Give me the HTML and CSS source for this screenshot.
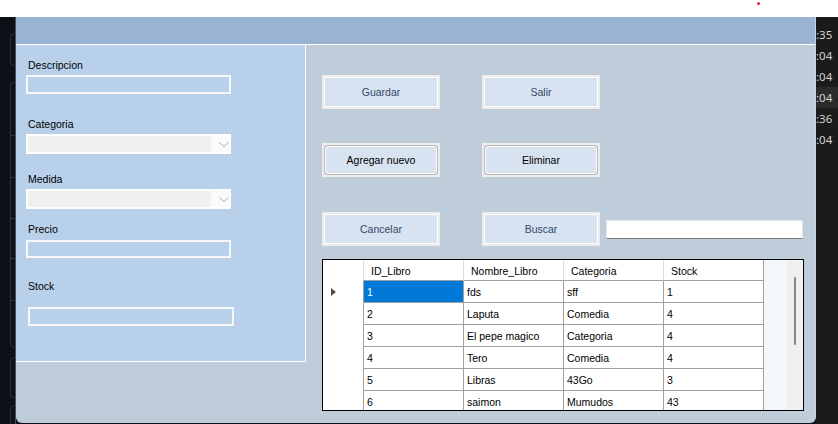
FILE: index.html
```html
<!DOCTYPE html>
<html lang="es">
<head>
<meta charset="utf-8">
<title>Libros</title>
<link rel="stylesheet" href="styles.css">
</head>
<body>
<div class="topbar"><span class="rec-dot"></span></div>
<div class="desk">
  <div class="edge-left">
    <svg class="edge-shapes" width="15" height="407" viewBox="0 0 15 407">
      <rect x="10.5" y="16.5" width="20" height="32" rx="4" />
      <rect x="10.5" y="65.5" width="20" height="265" rx="4" />
      <line x1="10" y1="118.5" x2="15" y2="118.5" />
      <line x1="10" y1="160.5" x2="15" y2="160.5" />
      <line x1="10" y1="201.5" x2="15" y2="201.5" />
      <line x1="10" y1="241.5" x2="15" y2="241.5" />
      <line x1="10" y1="283.5" x2="15" y2="283.5" />
      <rect x="10.5" y="340.5" width="20" height="40" rx="4" />
      <rect x="10.5" y="388.5" width="20" height="40" rx="4" />
    </svg>
  </div>
  <div class="window">
    <div class="caption"></div>
    <div class="client">
      <div class="panel">
        <span class="lbl">Descripcion</span>
        <div class="txt"></div>
        <span class="lbl mt-cat">Categoria</span>
        <div class="combo">
          <div class="combo-field"></div>
          <svg class="chev" width="10" height="5" viewBox="0 0 10 5"><polyline points="0.5,0.5 5,4.5 9.5,0.5" /></svg>
        </div>
        <span class="lbl mt-med">Medida</span>
        <div class="combo">
          <div class="combo-field"></div>
          <svg class="chev" width="10" height="5" viewBox="0 0 10 5"><polyline points="0.5,0.5 5,4.5 9.5,0.5" /></svg>
        </div>
        <span class="lbl mt-pre">Precio</span>
        <div class="txt txt-pre"></div>
        <span class="lbl mt-sto">Stock</span>
        <div class="txt txt-sto"></div>
      </div>
      <div class="actions">
        <div class="btn-row">
          <div class="btn"><span class="face">Guardar</span></div>
          <div class="btn gap-col"><span class="face">Salir</span></div>
        </div>
        <div class="btn-row row-2">
          <div class="btn active"><span class="face">Agregar nuevo</span></div>
          <div class="btn active gap-col"><span class="face">Eliminar</span></div>
        </div>
        <div class="btn-row row-3">
          <div class="btn"><span class="face">Cancelar</span></div>
          <div class="btn gap-col"><span class="face">Buscar</span></div>
          <div class="search"></div>
        </div>
        <div class="dgv">
          <div class="dgv-table">
            <div class="rh"></div>
            <div class="hc">ID_Libro</div>
            <div class="hc">Nombre_Libro</div>
            <div class="hc">Categoria</div>
            <div class="hc last">Stock</div>

            <div class="rh"><span class="cur"></span></div>
            <div class="c sel">1</div>
            <div class="c">fds</div>
            <div class="c">sff</div>
            <div class="c last">1</div>

            <div class="rh"></div>
            <div class="c">2</div>
            <div class="c">Laputa</div>
            <div class="c">Comedia</div>
            <div class="c last">4</div>

            <div class="rh"></div>
            <div class="c">3</div>
            <div class="c">El pepe magico</div>
            <div class="c">Categoria</div>
            <div class="c last">4</div>

            <div class="rh"></div>
            <div class="c">4</div>
            <div class="c">Tero</div>
            <div class="c">Comedia</div>
            <div class="c last">4</div>

            <div class="rh"></div>
            <div class="c">5</div>
            <div class="c">Libras</div>
            <div class="c">43Go</div>
            <div class="c last">3</div>

            <div class="rh"></div>
            <div class="c">6</div>
            <div class="c">saimon</div>
            <div class="c">Mumudos</div>
            <div class="c last">43</div>
          </div>
          <div class="dgv-fill"></div>
          <div class="vscroll"><span class="thumb"></span></div>
        </div>
      </div>
    </div>
  </div>
  <div class="edge-right">
    <div class="ts">:35</div>
    <div class="ts">:04</div>
    <div class="ts">:04</div>
    <div class="ts hl">:04</div>
    <div class="ts">:36</div>
    <div class="ts">:04</div>
  </div>
</div>
</body>
</html>
```
FILE: styles.css
```css
html, body {
  margin: 0;
  padding: 0;
}
body {
  width: 838px;
  height: 424px;
  overflow: hidden;
  display: flex;
  flex-direction: column;
  background: #0d1117;
  font-family: "Liberation Sans", Arial, sans-serif;
  font-size: 10.5px;
  color: #000;
}
.topbar {
  flex: none;
  height: 17px;
  background: #fff;
  position: relative;
}
.rec-dot {
  position: absolute;
  left: 757px;
  top: 2px;
  width: 3px;
  height: 3px;
  border-radius: 50%;
  background: #e8202a;
}
.desk {
  flex: 1;
  display: flex;
  min-height: 0;
}
.edge-left {
  flex: none;
  width: 15px;
  background: #0d1117;
  border-right: 1px solid #4a5058;
  overflow: hidden;
}
.edge-shapes {
  display: block;
}
.edge-shapes rect,
.edge-shapes line {
  fill: none;
  stroke: #2e343c;
  stroke-width: 1;
}
.window {
  flex: none;
  width: 800px;
  height: 406px;
  box-sizing: border-box;
  border-right: 1px solid #c9d1da;
  border-radius: 0 0 6px 6px;
  background: #bfccd9;
  display: flex;
  flex-direction: column;
  overflow: hidden;
}
.caption {
  flex: none;
  height: 28px;
  box-sizing: border-box;
  background: #98b4d2;
  border-bottom: 1px solid #fff;
}
.client {
  flex: 1;
  display: flex;
  align-items: flex-start;
}
.panel {
  flex: none;
  width: 290px;
  height: 317px;
  box-sizing: border-box;
  background: #b9d0ea;
  border-right: 1px solid #fff;
  border-bottom: 1px solid #fff;
  padding: 14px 0 0 10px;
}
.lbl {
  display: block;
  height: 12px;
  line-height: 12px;
  margin-left: 2px;
  white-space: nowrap;
}
.mt-cat { margin-top: 24px; }
.mt-med { margin-top: 19px; }
.mt-pre { margin-top: 14px; }
.mt-sto { margin-top: 22px; }
.txt {
  width: 205px;
  height: 19px;
  box-sizing: border-box;
  border: 2px solid #f6f7f8;
  margin-top: 4px;
}
.txt-pre {
  height: 18px;
  margin-top: 5px;
}
.txt-sto {
  width: 206px;
  margin-top: 15px;
  margin-left: 2px;
}
.combo {
  width: 205px;
  height: 20px;
  box-sizing: border-box;
  margin-top: 4px;
  border: 2px solid #fff;
  background: #fbfbfb;
  display: flex;
  align-items: center;
}
.combo-field {
  width: 184px;
  height: 16px;
  background: #f0f0f0;
}
.chev {
  margin-left: 8px;
  margin-top: 1px;
}
.chev polyline {
  fill: none;
  stroke: #a8a8a8;
  stroke-width: 1;
}
.actions {
  flex: 1;
  padding: 30px 0 0 16px;
}
.btn-row {
  display: flex;
  align-items: center;
  height: 34px;
}
.row-2 { margin-top: 34px; }
.row-3 { margin-top: 35px; }
.btn {
  flex: none;
  width: 118px;
  height: 34px;
  box-sizing: border-box;
  border: 2px solid #ececec;
  padding: 1px;
  background: #f6f6f6;
  display: flex;
}
.gap-col { margin-left: 42px; }
.face {
  flex: 1;
  display: flex;
  align-items: center;
  justify-content: center;
  background: #d7e3f0;
  box-shadow: 0 0 0 1px #fff;
  color: #33476b;
  white-space: nowrap;
}
.btn.active {
  background: #e6e6e6;
  padding: 1px;
}
.btn.active .face {
  border: 1px solid #fff;
  border-radius: 3px;
  box-shadow: 0 0 0 1px #b9b9b9;
  color: #000;
}
.search {
  flex: none;
  width: 197px;
  height: 19px;
  box-sizing: border-box;
  margin-left: 6px;
  background: #fff;
  border: 1px solid #e4e4e4;
  border-bottom-color: #7a7a7a;
}
.dgv {
  margin-top: 13px;
  width: 482px;
  height: 152px;
  box-sizing: border-box;
  border: 1px solid #000;
  display: flex;
  overflow: hidden;
  background: #f3f6fa;
}
.dgv-table {
  flex: none;
  display: grid;
  grid-template-columns: 40px 100px 100px 100px 101px;
  grid-template-rows: 21px;
  grid-auto-rows: 22px;
  align-content: start;
  background: #fff;
}
.rh {
  display: flex;
  align-items: center;
  background: #fff;
}
.cur {
  width: 0;
  height: 0;
  margin-left: 8px;
  border-left: 5px solid #505050;
  border-top: 4px solid transparent;
  border-bottom: 4px solid transparent;
}
.hc,
.c {
  box-sizing: border-box;
  border-left: 1px solid #a0a0a0;
  border-bottom: 1px solid #a0a0a0;
  display: flex;
  align-items: center;
  white-space: nowrap;
  overflow: hidden;
}
.hc {
  border-left-color: #dedede;
  padding-left: 7px;
  padding-top: 1px;
}
.c {
  padding-left: 3px;
  padding-top: 1px;
}
.last {
  border-right: 1px solid #a0a0a0;
}
.c.sel {
  background: #0078d7;
  color: #fff;
}
.dgv-fill {
  flex: none;
  width: 23px;
}
.vscroll {
  flex: none;
  width: 16px;
  background: #f0f0f0;
}
.thumb {
  display: block;
  width: 2px;
  height: 68px;
  margin: 17px 0 0 7px;
  border-radius: 1px;
  background: #868686;
}
.edge-right {
  flex: 1;
  min-width: 0;
  background: #1b1b1b;
  padding-top: 7px;
  overflow: hidden;
}
.ts {
  height: 21px;
  line-height: 21px;
  font-family: "Noto Sans", "Liberation Sans", sans-serif;
  font-size: 11.5px;
  color: #d2d2d2;
  white-space: nowrap;
}
.ts.hl {
  background: #2b2b2b;
}
```
